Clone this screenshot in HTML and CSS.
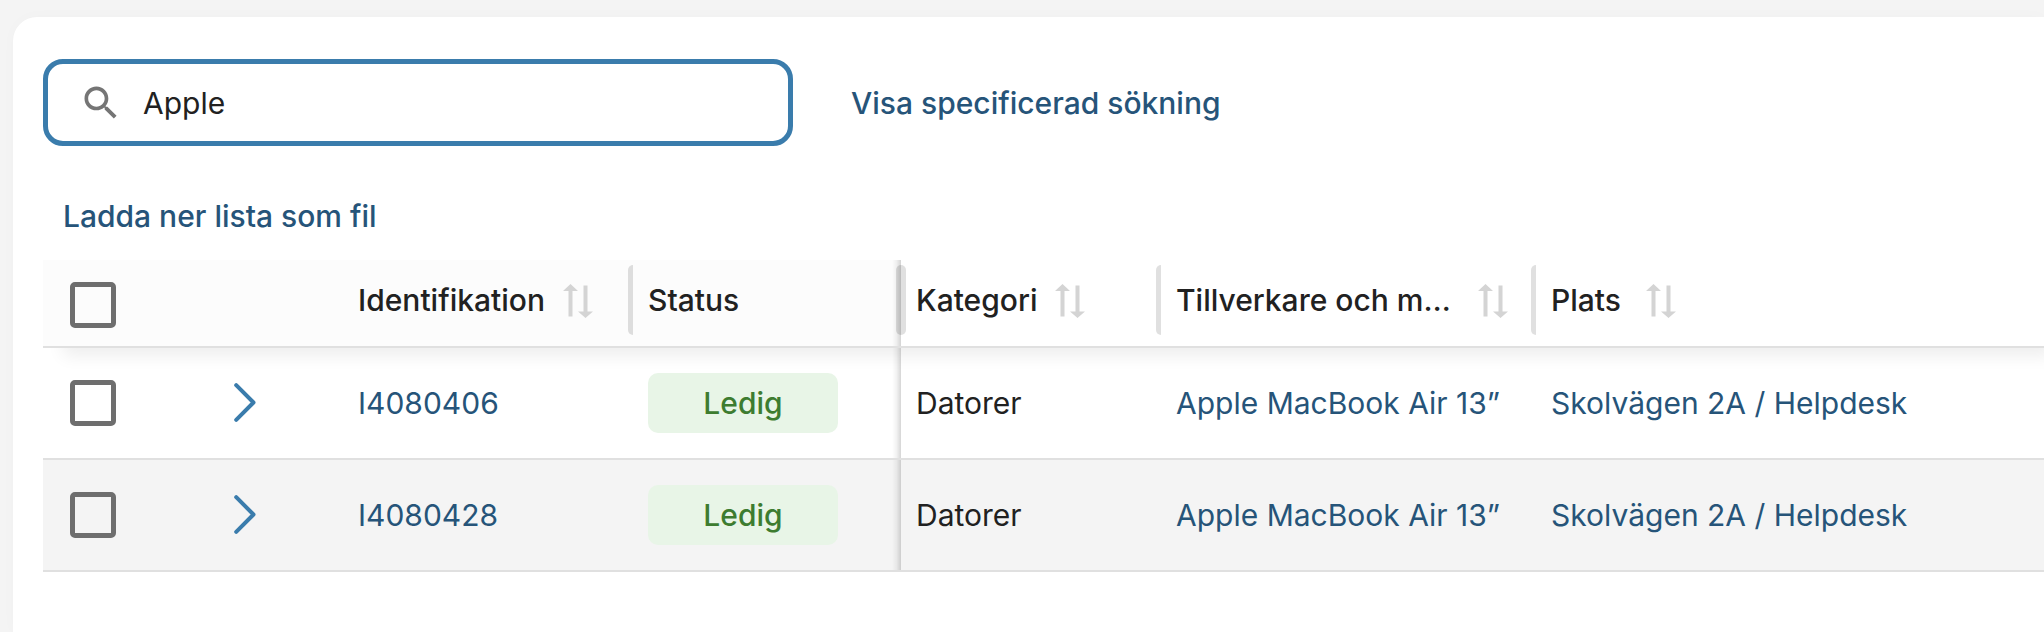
FILE: index.html
```html
<!DOCTYPE html>
<html lang="sv">
<head>
    <meta charset="UTF-8">
    <meta name="viewport" content="width=device-width, initial-scale=1.0">
    <title>Inventarier</title>
    <link rel="stylesheet" href="styles.css">
</head>
<body>

<!-- Ikoner som används flera gånger -->
<svg class="icon-defs" aria-hidden="true">
    <symbol id="icon-sort" viewBox="0 0 30 34">
        <path d="M7.500 0L15 7H9.500V32.500H5.500V7H0z"/>
        <path d="M22.500 34L15 27.500H20.500V1.500H24.500V27.500H30z"/>
    </symbol>
    <symbol id="icon-chevron" viewBox="0 0 22 40">
        <path d="M2.200 2.200L19.500 19.500L2.200 36.800" fill="none" stroke="currentColor" stroke-width="4" stroke-linecap="round" stroke-linejoin="round"/>
    </symbol>
</svg>

<main class="card">
    <div class="search-row">
        <label class="search-box">
            <svg class="search-icon" viewBox="0 0 24 24" aria-hidden="true">
                <path d="M15.5 14h-.79l-.28-.27C15.410 12.590 16 11.110 16 9.500 16 5.910 13.090 3 9.500 3S3 5.910 3 9.500 5.910 16 9.500 16c1.610 0 3.090-.59 4.230-1.570l.27.28v.79l5 4.990L20.490 19l-4.990-5zm-6 0C7.010 14 5 11.990 5 9.500S7.010 5 9.500 5 14 7.010 14 9.500 11.990 14 9.500 14z"/>
            </svg>
            <input type="text" class="search-input" value="Apple" aria-label="Sök">
        </label>
        <a href="#" class="action-link">Visa specificerad sökning</a>
    </div>

    <div class="toolbar">
        <a href="#" class="action-link">Ladda ner lista som fil</a>
    </div>

    <table class="grid">
        <colgroup>
            <col class="col-check">
            <col class="col-expand">
            <col class="col-id">
            <col class="col-status">
            <col class="col-category">
            <col class="col-model">
            <col class="col-place">
        </colgroup>
        <thead>
            <tr>
                <th class="pinned check-cell"><input type="checkbox" class="checkbox" aria-label="Markera alla"></th>
                <th class="pinned"></th>
                <th class="pinned resizable">
                    <div class="head"><span class="head-label">Identifikation</span><button class="sort-btn" aria-label="Sortera"><svg class="sort-icon"><use href="#icon-sort"/></svg></button></div>
                </th>
                <th class="pinned pinned-edge resizable resizable-wide">
                    <div class="head"><span class="head-label">Status</span></div>
                </th>
                <th class="resizable">
                    <div class="head"><span class="head-label">Kategori</span><button class="sort-btn" aria-label="Sortera"><svg class="sort-icon"><use href="#icon-sort"/></svg></button></div>
                </th>
                <th class="resizable">
                    <div class="head"><span class="head-label">Tillverkare och modell</span><button class="sort-btn" aria-label="Sortera"><svg class="sort-icon"><use href="#icon-sort"/></svg></button></div>
                </th>
                <th>
                    <div class="head"><span class="head-label">Plats</span><button class="sort-btn" aria-label="Sortera"><svg class="sort-icon"><use href="#icon-sort"/></svg></button></div>
                </th>
            </tr>
        </thead>
        <tbody>
            <tr>
                <td class="check-cell"><input type="checkbox" class="checkbox" aria-label="Markera I4080406"></td>
                <td class="expand-cell"><button class="expand-btn" aria-label="Visa detaljer"><svg class="expand-icon"><use href="#icon-chevron"/></svg></button></td>
                <td><a href="#" class="cell-link">I4080406</a></td>
                <td class="pinned-edge"><span class="badge">Ledig</span></td>
                <td>Datorer</td>
                <td><a href="#" class="cell-link">Apple MacBook Air 13”</a></td>
                <td><a href="#" class="cell-link">Skolvägen 2A / Helpdesk</a></td>
            </tr>
            <tr>
                <td class="check-cell"><input type="checkbox" class="checkbox" aria-label="Markera I4080428"></td>
                <td class="expand-cell"><button class="expand-btn" aria-label="Visa detaljer"><svg class="expand-icon"><use href="#icon-chevron"/></svg></button></td>
                <td><a href="#" class="cell-link">I4080428</a></td>
                <td class="pinned-edge"><span class="badge">Ledig</span></td>
                <td>Datorer</td>
                <td><a href="#" class="cell-link">Apple MacBook Air 13”</a></td>
                <td><a href="#" class="cell-link">Skolvägen 2A / Helpdesk</a></td>
            </tr>
        </tbody>
    </table>
</main>

</body>
</html>
```
FILE: styles.css
```css
* {
    box-sizing: border-box;
}

body {
    margin: 0;
    padding: 17px 0 0 13px;
    background-color: #f4f4f4;
    color: #212121;
    font-family: Inter, "Liberation Sans", sans-serif;
    font-size: 30px;
    line-height: 36px;
}

.icon-defs {
    display: none;
}

/* Vitt kort runt hela listan */
.card {
    min-height: calc(100vh - 17px);
    padding: 42px 0 0 30px;
    background-color: #fff;
    border-radius: 24px 0 0 0;
    box-shadow: 0 0 16px rgba(0, 0, 0, 0.02);
}

/* Sökfält */
.search-row {
    display: flex;
    align-items: center;
    gap: 58px;
}

.search-box {
    display: flex;
    align-items: center;
    gap: 20px;
    flex: 0 1 750px;
    height: 87px;
    padding: 1px 31px 0;
    border: 5px solid #3a7cac;
    border-radius: 20px;
}

.search-icon {
    flex: none;
    width: 44px;
    height: 44px;
    fill: #757575;
}

.search-input {
    flex: 1;
    min-width: 0;
    padding: 0;
    border: none;
    outline: none;
    background: none;
    color: inherit;
    font: inherit;
}

.action-link {
    color: #265479;
    font-weight: 500;
    text-decoration: none;
}

.toolbar {
    padding: 52px 20px 26px;
}

/* Tabell */
.grid {
    width: 100%;
    table-layout: fixed;
    border-collapse: separate;
    border-spacing: 0;
}

.col-check,
.col-expand {
    width: 150px;
}

.col-id {
    width: 290px;
}

.col-status {
    width: 268px;
}

.col-category {
    width: 260px;
}

.col-model {
    width: 375px;
}

thead {
    position: relative;
    z-index: 1;
    box-shadow: 14px 14px 16px -6px rgba(0, 0, 0, 0.07);
}

th,
td {
    position: relative;
    padding: 0 15px;
    border-bottom: 2px solid #e0e0e0;
    text-align: left;
    white-space: nowrap;
}

th {
    padding-top: 22px;
    padding-bottom: 18px;
    background-color: #fff;
    font-weight: 500;
    vertical-align: top;
}

th.pinned {
    background-color: #fcfcfc;
}

td {
    height: 112px;
    vertical-align: middle;
}

tbody tr:nth-child(even) {
    background-color: #f4f4f4;
}

th.check-cell,
td.check-cell {
    padding-left: 27px;
}

.expand-cell {
    padding-left: 41px;
}

/* Skugga vid kanten av de låsta kolumnerna */
.pinned-edge::after {
    content: "";
    position: absolute;
    top: 0;
    right: 0;
    bottom: 0;
    width: 9px;
    background: linear-gradient(to right, rgba(0, 0, 0, 0), rgba(0, 0, 0, 0.05) 50%, rgba(0, 0, 0, 0.16));
}

/* Handtag för att ändra kolumnbredd */
.resizable::before {
    content: "";
    position: absolute;
    z-index: 1;
    top: 5px;
    right: 0;
    width: 5px;
    height: 70px;
    border-radius: 5px 0 0 5px;
    background-color: rgba(0, 0, 0, 0.12);
}

.resizable-wide {
    z-index: 1;
}

.resizable-wide::before {
    right: -5px;
    width: 10px;
    border-radius: 5px;
}

.head {
    display: flex;
    align-items: center;
    gap: 18px;
}

.head-label {
    min-width: 77px;
    max-width: 284px;
    overflow: hidden;
    text-overflow: ellipsis;
}

.sort-btn,
.expand-btn {
    display: block;
    flex: none;
    padding: 0;
    border: none;
    background: none;
    cursor: pointer;
}

.sort-btn {
    padding-top: 2px;
}

.sort-icon {
    display: block;
    width: 30px;
    height: 34px;
    fill: #d4d4d4;
}

.expand-icon {
    display: block;
    width: 22px;
    height: 40px;
    color: #3a7cac;
}

.checkbox {
    display: block;
    appearance: none;
    width: 46px;
    height: 46px;
    margin: 0;
    border: 5px solid #6e6e6e;
    border-radius: 5px;
    cursor: pointer;
}

.checkbox:checked {
    background-color: #3a7cac;
}

.cell-link {
    color: #265479;
    text-decoration: none;
}

.badge {
    display: block;
    width: 190px;
    border-radius: 10px;
    background-color: #e8f5e7;
    color: #3d7c30;
    font-weight: 500;
    line-height: 60px;
    text-align: center;
}
```
